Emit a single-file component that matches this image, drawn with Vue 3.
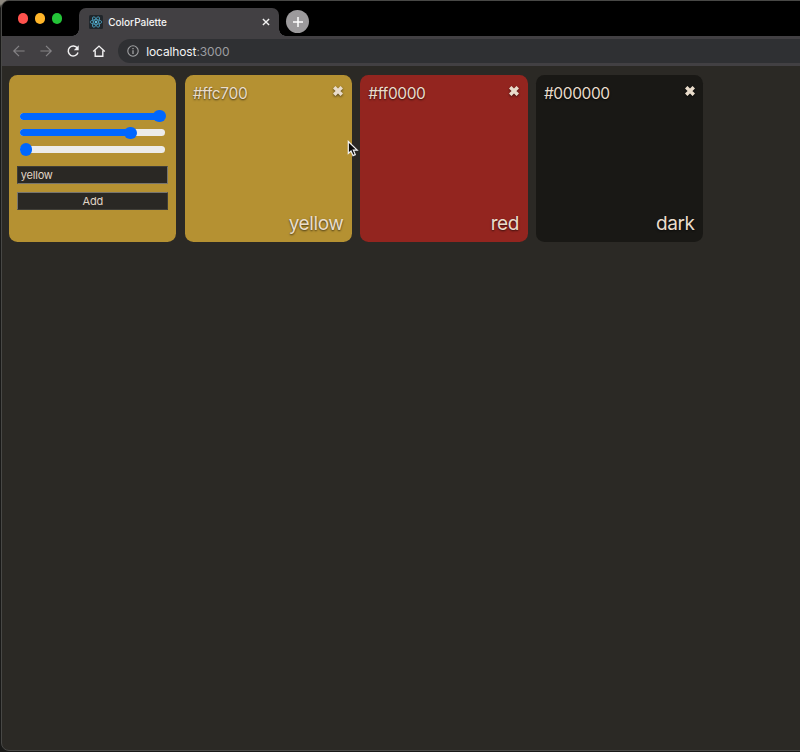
<script setup>
import { ref, computed } from 'vue'

const channels = ref([
  { name: 'red', value: 255 },
  { name: 'green', value: 199 },
  { name: 'blue', value: 0 },
])
const sliders = computed(() =>
  channels.value.map((c) => ({ name: c.name, offset: (c.value / 255) * 133.7 }))
)
const label = ref('yellow')
const colors = [
  { hex: '#ffc700', name: 'yellow', shown: '#b59132' },
  { hex: '#ff0000', name: 'red', shown: '#93251f' },
  { hex: '#000000', name: 'dark', shown: '#191815' },
]
</script>

<template>
  <div class="desktop">
    <div class="window">
      <header class="tabs">
        <div class="lights">
          <i class="light close"></i><i class="light min"></i><i class="light max"></i>
        </div>
        <div class="tab">
          <svg class="favicon" width="14" height="14" viewBox="0 0 14 14">
            <rect width="14" height="14" rx="1.5" fill="#20262b" />
            <g fill="none" stroke="#4b9fbd" stroke-width=".85">
              <ellipse cx="7" cy="7" rx="5.8" ry="2.3" />
              <ellipse cx="7" cy="7" rx="5.8" ry="2.3" transform="rotate(60 7 7)" />
              <ellipse cx="7" cy="7" rx="5.8" ry="2.3" transform="rotate(120 7 7)" />
            </g>
            <circle cx="7" cy="7" r="1.2" fill="#62bddb" />
          </svg>
          <span class="title">ColorPalette</span>
          <svg class="tab-close" width="8" height="8" viewBox="0 0 8 8">
            <path d="M.9.9 7.1 7.1M7.1.9.9 7.1" stroke="#f1f1f1" stroke-width="1.4" />
          </svg>
        </div>
        <div class="plus">
          <svg width="12" height="12" viewBox="0 0 12 12">
            <path d="M6 1v10M1 6h10" stroke="#fff" stroke-width="1.5" />
          </svg>
        </div>
      </header>
      <div class="toolbar">
        <svg class="nav" width="14" height="14" viewBox="0 0 14 14" fill="none" stroke="#858386" stroke-width="1.2">
          <path d="M12.6 7H1.8M7 1.8 1.8 7 7 12.2" />
        </svg>
        <svg class="nav" width="14" height="14" viewBox="0 0 14 14" fill="none" stroke="#858386" stroke-width="1.2">
          <path d="M1.4 7h10.8M7 1.8 12.2 7 7 12.2" />
        </svg>
        <svg class="nav" width="14" height="14" viewBox="0 0 14 14">
          <path d="M11.4 4.2A5 5 0 1 0 12 8.5" fill="none" stroke="#f1f0f1" stroke-width="1.5" />
          <path d="M12.7 1.3v5H7.8z" fill="#f1f0f1" />
        </svg>
        <svg class="nav" width="14" height="14" viewBox="0 0 14 14">
          <path d="M1.2 7.5 7 2.1l5.8 5.4M3.2 6.5v5.7h7.6V6.5" fill="none" stroke="#f1f0f1" stroke-width="1.4" />
        </svg>
        <div class="address">
          <svg width="12" height="12" viewBox="0 0 12 12">
            <circle cx="6" cy="6" r="5.2" fill="none" stroke="#a1a2a4" stroke-width="1.1" />
            <path d="M6 5.2v3.7M6 3v1.3" stroke="#a1a2a4" stroke-width="1.3" />
          </svg>
          <span class="url">localhost<span class="port">:3000</span></span>
        </div>
      </div>
      <main class="page">
        <form class="card form" @submit.prevent>
          <div class="sliders">
            <div v-for="s in sliders" :key="s.name" class="slider">
              <div class="fill" :style="{ width: s.offset + 'px' }"></div>
              <div class="thumb"></div>
            </div>
          </div>
          <input v-model="label" class="field" type="text" />
          <button class="field add">Add</button>
        </form>
        <section v-for="c in colors" :key="c.hex" class="card swatch" :style="{ background: c.shown }">
          <div class="top">
            <span class="hex">{{ c.hex }}</span>
            <svg class="remove" width="10" height="10" viewBox="0 0 10 10">
              <path d="M1.2 1.2 8.8 8.8M8.8 1.2 1.2 8.8" stroke="#e9dccb" stroke-width="3.5" />
            </svg>
          </div>
          <div class="name">{{ c.name }}</div>
        </section>
      </main>
    </div>
    <svg class="cursor" width="12" height="18" viewBox="0 0 12 18">
      <path d="M1.3 1.5v12l2.7-2.5 2 4.6 2.3-1-2-4.5h3.9z" fill="#090909" stroke="#f2f2f2" stroke-width="1.2" />
    </svg>
  </div>
</template>

<style>
body {
  background: #191918;
}
</style>

<style scoped>
.desktop {
  position: relative;
  box-sizing: border-box;
  width: 800px;
  height: 752px;
  padding-left: 1px;
  overflow: hidden;
  background: linear-gradient(#8c877e 0, #8c877e 4px, #191918 8px);
  font-family: Inter, 'Liberation Sans', sans-serif;
}
.window {
  box-sizing: border-box;
  display: flex;
  flex-direction: column;
  width: 810px;
  height: 751px;
  border: 1px solid #484846;
  border-radius: 8px;
  overflow: hidden;
  background: #2b2925;
}
.tabs {
  display: flex;
  flex: none;
  height: 35px;
  background: #000;
}
.lights {
  display: flex;
  gap: 6.6px;
  width: 60.5px;
  padding: 12.4px 0 0 16.2px;
}
.light {
  width: 10.2px;
  height: 10.2px;
  border-radius: 50%;
}
.close { background: #ff524d; }
.min { background: #ffb529; }
.max { background: #24c438; }
.tab {
  position: relative;
  box-sizing: border-box;
  display: flex;
  align-items: center;
  width: 200px;
  height: 28px;
  margin-top: 7px;
  padding: 0 9px 0 10px;
  border-radius: 7px 7px 0 0;
  background: #424043;
}
.tab::before,
.tab::after {
  content: '';
  position: absolute;
  bottom: 0;
  width: 7px;
  height: 7px;
}
.tab::before {
  left: -7px;
  background: radial-gradient(circle at 0 0, #000 6.5px, #424043 7px);
}
.tab::after {
  right: -7px;
  background: radial-gradient(circle at 100% 0, #000 6.5px, #424043 7px);
}
.title {
  flex: 1;
  margin-left: 5.5px;
  color: #f4f4f4;
  font-size: 10px;
  font-weight: 500;
  line-height: 14px;
}
.plus {
  display: flex;
  align-items: center;
  justify-content: center;
  width: 23px;
  height: 23px;
  margin: 9px 0 0 7.5px;
  border-radius: 50%;
  background: #9c9a9c;
}
.toolbar {
  box-sizing: border-box;
  display: flex;
  flex: none;
  align-items: center;
  height: 30px;
  padding-left: 10px;
  background: #424043;
}
.nav {
  flex: none;
  margin-right: 12.8px;
}
.address {
  box-sizing: border-box;
  display: flex;
  flex: 1;
  align-items: center;
  height: 24px;
  margin-left: -1px;
  padding-left: 9px;
  border-radius: 12px 0 0 12px;
  background: #2f3033;
}
.url {
  margin-left: 7px;
  color: #f4f4f4;
  font-size: 12px;
  letter-spacing: -0.12px;
}
.port {
  color: #9c9da0;
}
.page {
  display: flex;
  flex: 1;
  align-items: flex-start;
  gap: 8.4px;
  padding: 9.4px 0 0 7.2px;
}
.card {
  box-sizing: border-box;
  flex: none;
  width: 167.2px;
  height: 167px;
  border-radius: 8.5px;
}
.form {
  padding: 34.3px 8.2px 0;
  background: #b59132;
}
.sliders {
  display: grid;
  gap: 3.7px;
  padding: 0 2.4px;
}
.slider {
  position: relative;
  display: flex;
  align-items: center;
  height: 13px;
}
.slider::before {
  content: '';
  position: absolute;
  inset: 3px 1px 3px 0;
  border-radius: 4px;
  background: #ececea;
}
.fill {
  position: relative;
  height: 7px;
  border-radius: 4px 0 0 4px;
  background: #0067ff;
  box-shadow: 4px 0 #0067ff;
}
.thumb {
  position: relative;
  width: 12.6px;
  height: 12.6px;
  border-radius: 50%;
  background: #0067ff;
}
.field {
  box-sizing: border-box;
  display: block;
  width: 151px;
  height: 18px;
  margin: 10px 0 0;
  padding: 0 2.4px;
  border: 1px solid #403e37;
  border-right-color: #77756e;
  border-bottom-color: #77756e;
  border-radius: 0;
  background: #2a2824;
  color: #e0d4c5;
  font: 11px/14px Inter, sans-serif;
  letter-spacing: -0.2px;
}
.add {
  margin-top: 8.3px;
  border-color: #77756e #403e37 #403e37 #77756e;
  letter-spacing: -0.1px;
}
.swatch {
  display: flex;
  flex-direction: column;
  justify-content: space-between;
  padding: 8px 8.5px 6.6px 8px;
  color: #eaddcc;
  text-shadow: 0 1px 2px rgba(0, 0, 0, 0.65);
}
.top {
  display: flex;
  align-items: flex-start;
  justify-content: space-between;
}
.hex {
  margin-top: 1px;
  font-size: 15.5px;
  font-weight: 400;
  line-height: 20px;
  letter-spacing: -0.38px;
}
.remove {
  margin-top: 3px;
  filter: drop-shadow(0 1px 1px rgba(0, 0, 0, 0.55));
}
.name {
  font-size: 19px;
  line-height: 24px;
  font-weight: 400;
  letter-spacing: -0.4px;
  text-align: right;
}
.cursor {
  position: absolute;
  left: 347px;
  top: 139.5px;
}
</style>
